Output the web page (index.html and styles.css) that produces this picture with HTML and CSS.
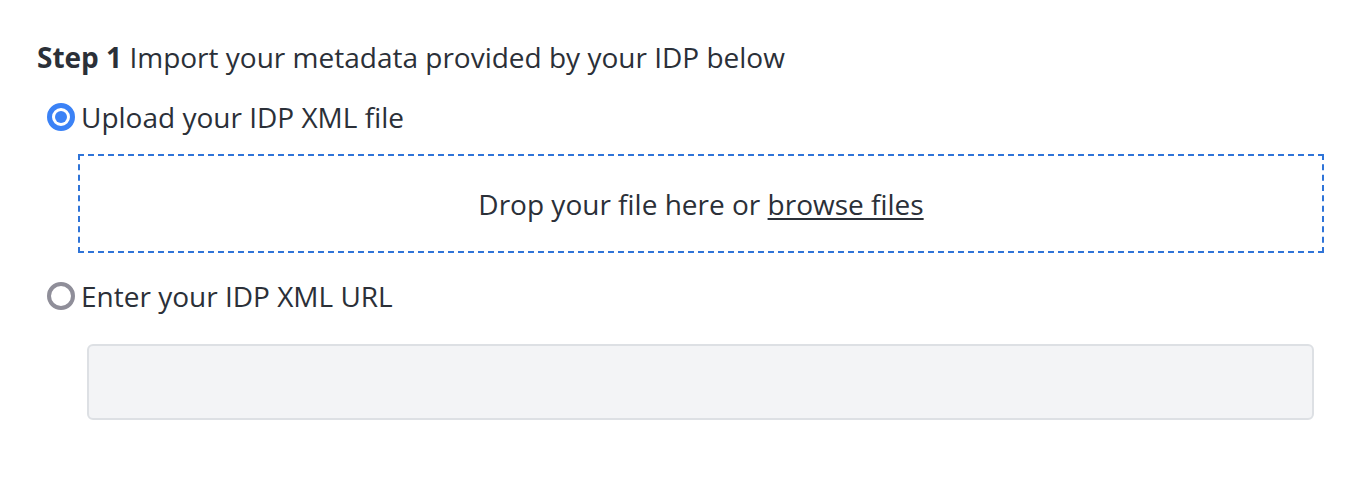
FILE: index.html
```html
<!DOCTYPE html>
<html lang="en">
<head>
    <meta charset="UTF-8">
    <title>IDP metadata</title>
    <link rel="stylesheet" href="styles.css">
</head>
<body>
    <div class="step">
        <p class="step-title"><b>Step 1</b> Import your metadata provided by your IDP below</p>

        <label class="option">
            <span class="radio checked"></span>
            <span>Upload your IDP XML file</span>
        </label>
        <div class="dropzone">
            <span>Drop your file here or <a href="javascript:;">browse files</a></span>
        </div>

        <label class="option option-url">
            <span class="radio"></span>
            <span>Enter your IDP XML URL</span>
        </label>
        <div class="url-row">
            <input class="url-input" type="text" disabled>
        </div>
    </div>
</body>
</html>
```

FILE: styles.css
```css
* {
    margin: 0;
    padding: 0;
    box-sizing: border-box;
}

body {
    font-family: "Open Sans", "Noto Sans", sans-serif;
    font-size: 28px;
    color: #2b3038;
    background: #fff;
}

.step {
    padding: 37px 36px 0 47px;
}

.step-title {
    margin-left: -10px;
    line-height: 40px;
}

.step-title b {
    font-weight: 700;
}

.option {
    display: flex;
    align-items: center;
    gap: 6px;
    line-height: 40px;
    margin-top: 20px;
}

.option-url {
    margin-top: 23px;
}

/* 自定义的单选按钮 */
.radio {
    width: 28px;
    height: 28px;
    border-radius: 50%;
    border: 4px solid #8f8e99;
    background: #fff;
    flex-shrink: 0;
}

.radio.checked {
    border: 5px solid #3b82f6;
    position: relative;
}

.radio.checked::after {
    content: "";
    position: absolute;
    left: 3px;
    top: 3px;
    width: 12px;
    height: 12px;
    border-radius: 50%;
    background: #3b82f6;
}

.dropzone {
    margin: 17px 0 0 31px;
    height: 99px;
    border: 2px dashed #2f74d8;
    display: flex;
    align-items: center;
    justify-content: center;
}

.dropzone a {
    color: inherit;
    text-decoration: underline;
    text-underline-offset: 3px;
}

.url-row {
    padding: 28px 10px 0 40px;
}

.url-input {
    display: block;
    width: 100%;
    height: 76px;
    background: #f3f4f6;
    border: 2px solid #dde0e4;
    border-radius: 6px;
}
```
